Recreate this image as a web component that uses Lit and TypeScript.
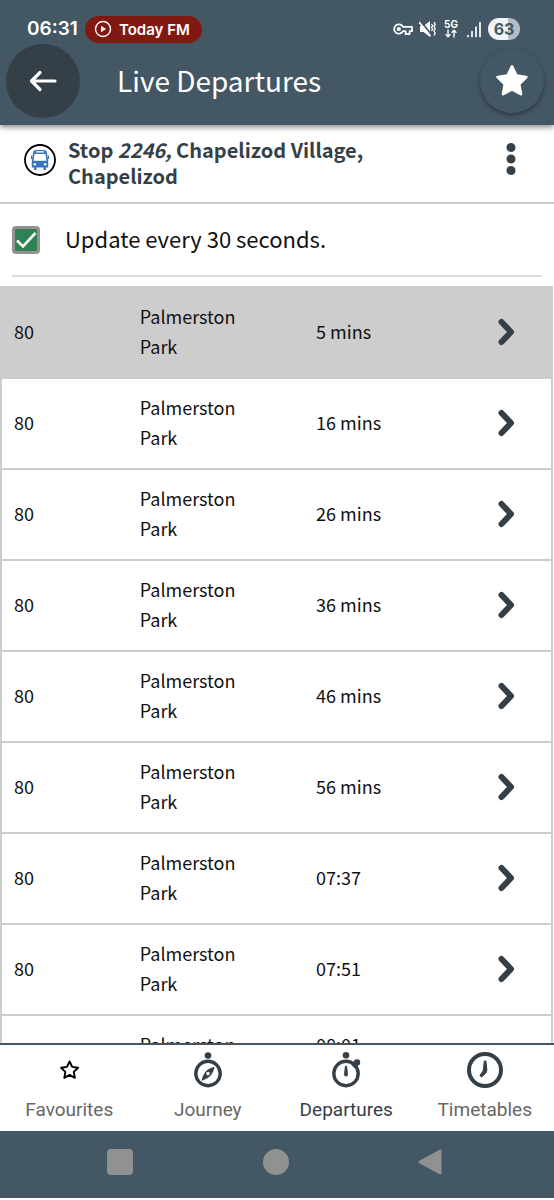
import { LitElement, html, css, svg } from "lit";
import { customElement, property, state } from "lit/decorators.js";
import { classMap } from "lit/directives/class-map.js";

interface Departure {
  route: string;
  destination: string;
  due: string;
  tall: boolean;
}

const times = ["5 mins", "16 mins", "26 mins", "36 mins", "46 mins", "56 mins", "07:37", "07:51", "08:01"];

@customElement("phone-status")
class PhoneStatus extends LitElement {
  static styles = css`
    :host {
      display: flex;
      align-items: center;
      justify-content: space-between;
      height: 30px;
      padding: 14px 34px 0 27px;
      color: #fff;
      font-family: Inter, sans-serif;
    }
    .side { display: flex; align-items: center; }
    .clock { font-size: 19px; font-weight: 600; line-height: 28px; width: 58px; white-space: nowrap; }
    .pill {
      display: flex;
      align-items: center;
      gap: 7px;
      height: 27px;
      padding: 0 12px 0 9px;
      border-radius: 14px;
      background: #821812;
      font-size: 15px;
      font-weight: 600;
      white-space: nowrap;
    }
    .signals { gap: 6px; }
    .net {
      display: flex;
      flex-direction: column;
      align-items: center;
      padding: 0 2px;
      font-size: 10px;
      font-weight: 700;
      line-height: 9px;
    }
    .battery {
      height: 22px;
      width: 32px;
      border-radius: 11px;
      background: linear-gradient(90deg, #f1f4f6 63%, #b4bdc3 63%);
      color: #445764;
      font-size: 16px;
      font-weight: 700;
      line-height: 22px;
      text-align: center;
    }
    svg { display: block; }
  `;
  render() {
    return html`
      <div class="side">
        <span class="clock">06:31</span>
        <span class="pill">
          <svg width="18" height="18" viewBox="0 0 18 18" aria-hidden="true">
            <circle cx="9" cy="9" r="7.5" fill="none" stroke="#fff" stroke-width="1.4"></circle>
            <path d="M7 5.8v6.4L12 9z" fill="#fff"></path>
          </svg>
          Today FM
        </span>
      </div>
      <div class="side signals">
        <svg width="20" height="14" viewBox="0 0 20 14" fill="none" stroke="#fff" stroke-width="1.8" aria-hidden="true">
          <path d="M10 4.8A4.7 4.7 0 1 0 10 9.2H12.6V12H16.6V9.2H19V4.8Z" stroke-linejoin="round"></path>
          <circle cx="5.8" cy="7" r="1.2"></circle>
        </svg>
        <svg width="17" height="18" viewBox="0 0 17 18" aria-hidden="true">
          <path d="M1 6h3.5L11 1v16L4.500 12H1z" fill="#fff"></path>
          <path d="M1 .5 13 15.500" stroke="#445764" stroke-width="2"></path>
          <path d="M0 2 11.500 16" stroke="#fff" stroke-width="1.6"></path>
          <path d="M12.500 4l1.200 1.700-1.200 1.800 1.200 1.700-1.200 1.800M15 2l1.200 2.200L15 6.500l1.200 2.200L15 11l1.200 2.200L15 15.500" fill="none" stroke="#fff" stroke-width="1.300"></path>
        </svg>
        <span class="net">
          5G
          <svg width="12" height="9" viewBox="0 0 12 9" fill="none" stroke="#fff" stroke-width="1.400" aria-hidden="true">
            <path d="M3 .5v7M.6 5.200 3 7.700 5.400 5.200M9 8.500v-7M6.600 3.800 9 1.300l2.400 2.500"></path>
          </svg>
        </span>
        <svg width="16" height="17" viewBox="0 0 16 17" fill="none" stroke="#fff" stroke-width="1.700" stroke-linecap="round" aria-hidden="true">
          <path d="M2 14.600v.8M6 10.500v5M10 6v9.500M14 1.500v14"></path>
        </svg>
        <span class="battery">63</span>
      </div>
    `;
  }
}

@customElement("departure-board")
class DepartureBoard extends LitElement {
  @property({ attribute: false }) rows: Departure[] = [];
  static styles = css`
    :host { display: block; }
    table {
      width: 100%;
      table-layout: fixed;
      border-collapse: collapse;
      border: 2px solid #ccc;
      font-size: 18px;
      line-height: 30px;
      color: #111;
    }
    tr { border-bottom: 2px solid #ccc; }
    .next { background: #cdcdcd; }
    td { height: 91px; padding: 0 32px 3px 12px; vertical-align: middle; box-sizing: border-box; }
    .route { width: 23%; }
    .dest { width: 32%; }
    .more { width: 16%; padding: 0 0 2px; text-align: center; }
    .tall { display: block; min-height: 60px; }
    button { border: 0; padding: 8px; background: none; display: inline-flex; vertical-align: middle; }
  `;
  render() {
    return html`
      <table aria-label="Departures">
        <tbody>
          ${this.rows.map(
            (row, i) => html`
              <tr class=${classMap({ next: i === 0 })}>
                <td class="route">${row.route}</td>
                <td class="dest">${row.destination}</td>
                <td><span class=${classMap({ tall: row.tall })}>${row.due}</span></td>
                <td class="more">
                  <button aria-label="Details">
                    <svg width="20" height="28" viewBox="0 0 20 28" fill="none" stroke="#353f48" stroke-width="6" stroke-linecap="round" stroke-linejoin="round">
                      <path d="M4.500 4 14 14 4.500 24"></path>
                    </svg>
                  </button>
                </td>
              </tr>
            `
          )}
        </tbody>
      </table>
    `;
  }
}

const star = "M12 1.800l3.100 6.400 7 1-5.100 5 1.300 7-6.300-3.400-6.300 3.400 1.300-7-5.100-5 7-1z";

const tabs = [
  {
    label: "Favourites",
    icon: svg`<path d=${star} transform="translate(8.500 8) scale(.84)" fill="none" stroke="#000" stroke-width="2.300" stroke-linejoin="round"></path>`,
  },
  {
    label: "Journey",
    icon: svg`
      <circle cx="18" cy="3.500" r="3.300" fill="#353f48"></circle>
      <circle cx="18" cy="21.500" r="12.200" fill="none" stroke="#353f48" stroke-width="3.400"></circle>
      <path fill="#353f48" fill-rule="evenodd" d="M24.300 15.200c.5.5-1.600 6-3.600 8.400s-8.200 5.500-8.800 5c-.6-.7 1.700-6.700 3.900-9.100s8-4.900 8.500-4.300zM18 19.800a1.800 1.800 0 1 0 0 3.600 1.800 1.800 0 0 0 0-3.600z"></path>`,
  },
  {
    label: "Departures",
    icon: svg`
      <circle cx="18" cy="3.300" r="3.300" fill="#353f48"></circle>
      <circle cx="29" cy="10.500" r="3.200" fill="#353f48"></circle>
      <path d="M25 14.500l4-4" stroke="#353f48" stroke-width="5"></path>
      <circle cx="18" cy="21.500" r="12.200" fill="none" stroke="#353f48" stroke-width="3.400"></circle>
      <path d="M17.300 14h1.400l1 8.500a1.700 1.700 0 0 1-3.400 0z" fill="#353f48" stroke="#353f48" stroke-width=".6"></path>`,
  },
  {
    label: "Timetables",
    icon: svg`
      <circle cx="18" cy="18" r="16" fill="none" stroke="#353f48" stroke-width="4"></circle>
      <path d="M17.300 9h1.600l1 9-.8 2.800-4.500 4.200-1.700-1.500 3.300-4.800z" fill="#353f48" stroke="#353f48" stroke-width="1" stroke-linejoin="round"></path>`,
  },
];

@customElement("tab-bar")
class TabBar extends LitElement {
  @property() current = "";
  static styles = css`
    :host { display: block; border-top: 2px solid #49535b; background: #fff; }
    nav { display: grid; grid-template-columns: repeat(4, 1fr); height: 86px; }
    a {
      display: flex;
      flex-direction: column;
      align-items: center;
      gap: 8px;
      padding-top: 7px;
      color: #666;
      font-family: Roboto, sans-serif;
      font-size: 19px;
      line-height: 28px;
      text-decoration: none;
    }
    .current { color: #353f48; }
    svg { display: block; overflow: visible; }
  `;
  render() {
    return html`
      <nav aria-label="Main">
        ${tabs.map(
          (tab) => html`
            <a href="#" class=${classMap({ current: tab.label === this.current })}>
              <svg width="36" height="36" viewBox="0 0 36 36" aria-hidden="true">${tab.icon}</svg>
              ${tab.label}
            </a>
          `
        )}
      </nav>
    `;
  }
}

@customElement("app-root")
class AppRoot extends LitElement {
  @state() private departures: Departure[] = times.map((due) => ({
    route: "80",
    destination: "Palmerston Park",
    due,
    tall: due === "08:01",
  }));

  static styles = css`
    :host {
      display: flex;
      flex-direction: column;
      height: 100vh;
      overflow: hidden;
      background: #fff;
      font-family: "Noto Sans CJK JP", "Noto Sans", sans-serif;
    }
    button { border: 0; padding: 0; background: none; display: grid; place-items: center; }
    svg { display: block; }
    header {
      flex: none;
      background: #445764;
      box-shadow: 0 2px 6px rgba(0, 0, 0, 0.5);
      z-index: 1;
    }
    .bar { display: flex; align-items: center; padding: 0 10px 7px 6px; }
    .back { width: 74px; height: 74px; border-radius: 50%; background: #353f48; }
    h1 { flex: 1; margin: 0 0 2px 37px; color: #fff; font-size: 28px; font-weight: 400; line-height: 40px; }
    .fav { width: 64px; height: 64px; border-radius: 50%; box-shadow: 0 2px 5px rgba(0, 0, 0, 0.35); }
    main { flex: 1; min-height: 0; overflow: hidden; }
    .stop {
      display: flex;
      align-items: flex-start;
      padding: 12px 35px 13px 24px;
      border-bottom: 2px solid #ccc;
    }
    .mark, .menu { display: grid; place-items: center; height: 46px; }
    h2 { flex: 1; margin: 0 80px 0 12px; color: #353f48; font-size: 20px; font-weight: 700; line-height: 26px; }
    .update { display: flex; align-items: center; height: 71px; margin: 0 12px; border-bottom: 2px solid #ddd; }
    label { font-size: 22px; line-height: 32px; color: #111; padding: 0 0 4px 25px; }
    input {
      appearance: none;
      width: 28px;
      height: 28px;
      margin: 0;
      border: 3px solid #929292;
      border-radius: 4px;
      background: #2f8253 url("data:image/svg+xml,%3Csvg xmlns='http://www.w3.org/2000/svg' viewBox='0 0 22 22'%3E%3Cpath d='M2 11.500 8 17.500 20.500 4' fill='none' stroke='white' stroke-width='2.600'/%3E%3C/svg%3E") center / 100%;
    }
    departure-board { margin: 9px 1px 0 0; }
    .keys {
      display: flex;
      flex: none;
      align-items: center;
      justify-content: space-between;
      height: 67px;
      padding: 0 112px 0 107px;
      box-sizing: border-box;
      background: #445764;
      margin-bottom: 2px;
    }
    .key { padding: 0 0 5px; }
  `;

  render() {
    return html`
      <header>
        <phone-status></phone-status>
        <div class="bar">
          <button class="back" aria-label="Back">
            <svg width="28" height="24" viewBox="0 0 28 24" fill="none" stroke="#fff" stroke-width="3.200" stroke-linecap="round" stroke-linejoin="round">
              <path d="M26 12H3M11 3.500 2.500 12l8.500 8.500"></path>
            </svg>
          </button>
          <h1>Live Departures</h1>
          <button class="fav" aria-label="Favourite">
            <svg width="34" height="34" viewBox="0 0 24 24" fill="#fff" stroke="#fff" stroke-width="2" stroke-linejoin="round">
              <path d=${star}></path>
            </svg>
          </button>
        </div>
      </header>
      <main>
        <section class="stop">
          <div class="mark">
            <svg width="32" height="32" viewBox="0 0 32 32" aria-hidden="true">
              <circle cx="16" cy="16" r="15" fill="#fff" stroke="#000" stroke-width="1.800"></circle>
              <path d="M12 6h8q3 0 3 3l1.200 7v7.500h-2.200v2.500h-2.500v-2.500h-7v2.500H10v-2.500H7.800V16L9 9q0-3 3-3z" fill="#3976bd"></path>
              <path d="M12 7.300h8v1.200h-8zM10.500 10h11l1 6.800h-13z" fill="#fff"></path>
              <circle cx="10.800" cy="20.300" r="1.300" fill="#fff"></circle>
              <circle cx="21.200" cy="20.300" r="1.300" fill="#fff"></circle>
              <path d="M7.500 11.500v3.500M24.500 11.500v3.500" stroke="#3976bd" stroke-width="1"></path>
            </svg>
          </div>
          <h2>Stop <em>2246,</em> Chapelizod Village, Chapelizod</h2>
          <button class="menu" aria-label="More options">
            <svg width="16" height="36" viewBox="0 0 16 36" fill="#353f48">
              <circle cx="8" cy="5.500" r="4.500"></circle>
              <circle cx="8" cy="17" r="4.500"></circle>
              <circle cx="8" cy="28.500" r="4.500"></circle>
            </svg>
          </button>
        </section>
        <div class="update">
          <input id="auto" type="checkbox" checked />
          <label for="auto">Update every 30 seconds.</label>
        </div>
        <departure-board .rows=${this.departures}></departure-board>
      </main>
      <tab-bar current="Departures"></tab-bar>
      <footer class="keys">
        <button class="key" aria-label="Recent apps">
          <svg width="26" height="26" viewBox="0 0 26 26"><rect width="26" height="26" rx="4" fill="#8f9291"></rect></svg>
        </button>
        <button class="key" aria-label="Home">
          <svg width="26" height="26" viewBox="0 0 26 26"><circle cx="13" cy="13" r="13" fill="#8f9291"></circle></svg>
        </button>
        <button class="key" aria-label="Back">
          <svg width="24" height="26" viewBox="0 0 24 26">
            <path d="M22.500 1.500v23L1.500 13z" fill="#8f9291" stroke="#8f9291" stroke-width="2" stroke-linejoin="round"></path>
          </svg>
        </button>
      </footer>
    `;
  }
}
